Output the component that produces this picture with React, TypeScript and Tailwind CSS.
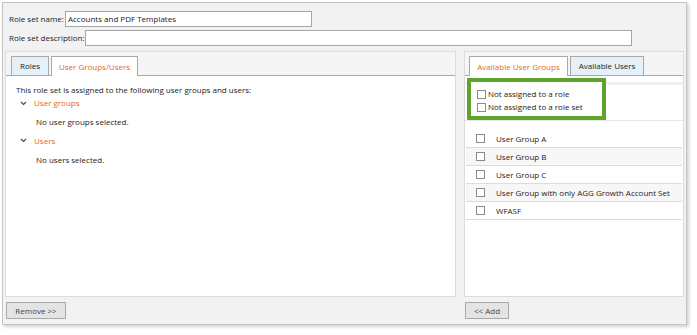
const ChevronDown = () => (
  <svg width="7" height="5" viewBox="0 0 7 5" className="shrink-0">
    <path d="M1 1l2.5 2.5L6 1" fill="none" stroke="#444" strokeWidth="1.1" />
  </svg>
);

const Box = () => (
  <span className="inline-block w-[9px] h-[9px] border border-[#8a8a8a] bg-white shrink-0" />
);

const groups = [
  "User Group A",
  "User Group B",
  "User Group C",
  "User Group with only AGG Growth Account Set",
  "WFASF",
];

export default function App() {
  return (
    <div className="w-[697px] h-[335px] bg-white text-[8px] text-[#222] font-['Open_Sans',sans-serif] pt-[2px] pl-[2px]">
      <div className="w-[685px] h-[323px] bg-[#f2f2f2] border border-[#c4c4c4] shadow-[2px_2px_3px_rgba(0,0,0,0.18)] flex flex-col px-[2px] pt-[8px]">
        {/* header fields */}
        <div className="flex items-center h-[16px] pl-[4px]">
          <span className="mr-[1px]">Role set name:</span>
          <div className="w-[247px] h-[16px] bg-white border border-[#a6a6a6] px-[2px] flex items-center">
            Accounts and PDF Templates
          </div>
        </div>
        <div className="flex items-center h-[16px] pl-[4px] mt-[3px]">
          <span className="mr-[1px]">Role set description:</span>
          <div className="w-[547px] h-[16px] bg-white border border-[#a6a6a6]" />
        </div>

        {/* panels */}
        <div className="flex gap-[8px] mt-[5px] h-[246px]">
          {/* left */}
          <div className="w-[451px] border border-[#dcdcdc] bg-white flex flex-col">
            <div className="h-[24px] bg-[#f5f5f5] border-b border-[#a9a9a9] flex items-end pl-[5px] gap-[2px]">
              <div className="w-[38px] h-[19px] border border-b-0 border-[#a9a9a9] bg-[#e5f1fa] flex items-center justify-center">
                Roles
              </div>
              <div className="w-[87px] h-[20px] border border-b-0 border-[#a9a9a9] bg-white text-[#dd6a1f] flex items-center justify-center -mb-px">
                User Groups/Users
              </div>
            </div>
            <div className="pl-[10px] pt-[7px]">
              <div className="h-[13px] leading-[13px]">This role set is assigned to the following user groups and users:</div>
              <div className="flex items-center gap-[7px] h-[14px] pl-[4px] text-[#dd6a1f]">
                <ChevronDown />
                User groups
              </div>
              <div className="h-[19px] leading-[19px] pl-[20px] mt-[2px]">No user groups selected.</div>
              <div className="flex items-center gap-[7px] h-[19px] pl-[4px] text-[#dd6a1f]">
                <ChevronDown />
                Users
              </div>
              <div className="h-[19px] leading-[19px] pl-[20px]">No users selected.</div>
            </div>
          </div>

          {/* right */}
          <div className="w-[220px] border border-[#dcdcdc] bg-white flex flex-col">
            <div className="h-[24px] bg-[#f5f5f5] border-b border-[#a9a9a9] flex items-end pl-[4px] gap-[2px]">
              <div className="w-[99px] h-[20px] border border-b-0 border-[#a9a9a9] bg-white text-[#dd6a1f] flex items-center justify-center -mb-px">
                Available User Groups
              </div>
              <div className="w-[74px] h-[19px] border border-b-0 border-[#a9a9a9] bg-[#e5f1fa] flex items-center justify-center">
                Available Users
              </div>
            </div>
            <div className="relative h-[45px] border-b border-[#e6e6e6]">
              <div className="h-[3px] mt-[6px] bg-[#f0f0f0]" />
              <div className="absolute left-[2px] top-[2px] w-[139px] h-[42px] border-[4px] border-[#5ba52b] bg-white pl-[6px] pt-[7px] flex flex-col gap-[3px]">
                <div className="flex items-center gap-[2px] h-[10px]">
                  <Box />
                  Not assigned to a role
                </div>
                <div className="flex items-center gap-[2px] h-[10px]">
                  <Box />
                  Not assigned to a role set
                </div>
              </div>
            </div>
            <div className="mt-[9px] px-[1px]">
              {groups.map((g, i) => (
                <div
                  key={g}
                  className={`h-[18px] flex items-center border-b border-[#dcdcdc] pl-[10px] gap-[11px] ${
                    i % 2 === 1 ? "bg-[#f7f7f7]" : "bg-white"
                  }`}
                >
                  <Box />
                  {g}
                </div>
              ))}
            </div>
          </div>
        </div>

        {/* buttons */}
        <div className="flex mt-[5px]">
          <div className="w-[451px] pl-[1px]">
            <button className="w-[60px] h-[17px] border border-[#a9a9a9] bg-[#e4e4e4] text-[#444] flex items-center justify-center">
              Remove &gt;&gt;
            </button>
          </div>
          <div className="ml-[9px]">
            <button className="w-[44px] h-[17px] border border-[#a9a9a9] bg-[#e4e4e4] text-[#444] flex items-center justify-center">
              &lt;&lt; Add
            </button>
          </div>
        </div>
      </div>
    </div>
  );
}
